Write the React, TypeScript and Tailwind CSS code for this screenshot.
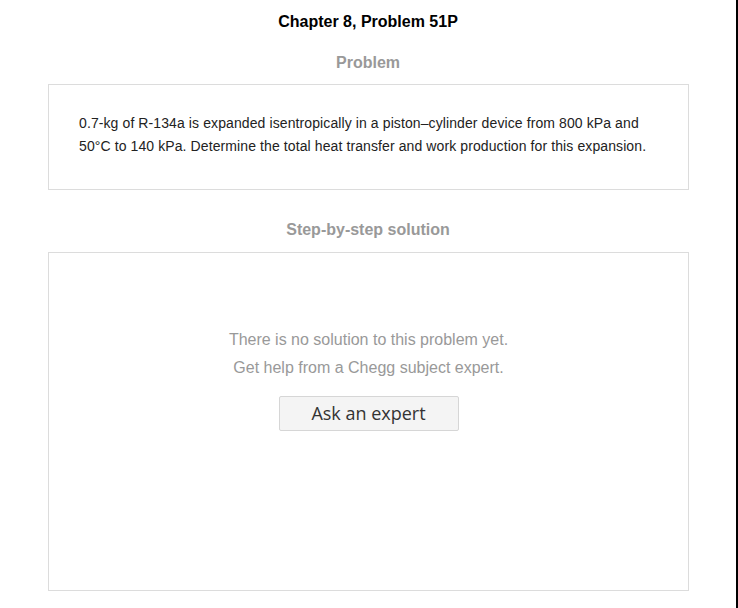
export default function App() {
  return (
    <div className="w-[738px] h-[608px] bg-white overflow-hidden flex" style={{ fontFamily: '"Liberation Sans", Arial, sans-serif' }}>
      <div className="w-[736px] h-full flex flex-col px-12">
        <div className="h-[44px] flex items-center justify-center text-[16px] font-bold text-black">
          Chapter 8, Problem 51P
        </div>
        <div className="h-[40px] pt-[9px] leading-[20px] text-center text-[16px] font-bold text-[#999]">
          Problem
        </div>
        <div className="w-[641px] h-[106px] border border-[#dcdcdc] pl-[30px] pr-[30px] pt-[27px]">
          <p className="text-[14px] leading-[23px] tracking-[0.1px] text-[#222]">
            0.7-kg of R-134a is expanded isentropically in a piston–cylinder device from 800 kPa and 50°C to 140 kPa. Determine the total heat transfer and work production for this expansion.
          </p>
        </div>
        <div className="h-[62px] pt-[30px] leading-[20px] text-center text-[16px] font-bold text-[#999]">
          Step-by-step solution
        </div>
        <div className="w-[641px] h-[339px] border border-[#dcdcdc] flex flex-col items-center pt-[73px]">
          <p className="text-[16px] leading-[28px] text-[#999]">There is no solution to this problem yet.</p>
          <p className="text-[16px] leading-[28px] text-[#999]">Get help from a Chegg subject expert.</p>
          <button
            className="mt-[14px] w-[180px] h-[35px] bg-[#f4f4f4] border border-[#d6d6d6] rounded-[2px] text-[18px] text-[#333]"
            style={{ fontFamily: '"Open Sans", sans-serif' }}
          >
            Ask an expert
          </button>
        </div>
      </div>
      <div className="w-[2px] h-full bg-black" />
    </div>
  );
}
